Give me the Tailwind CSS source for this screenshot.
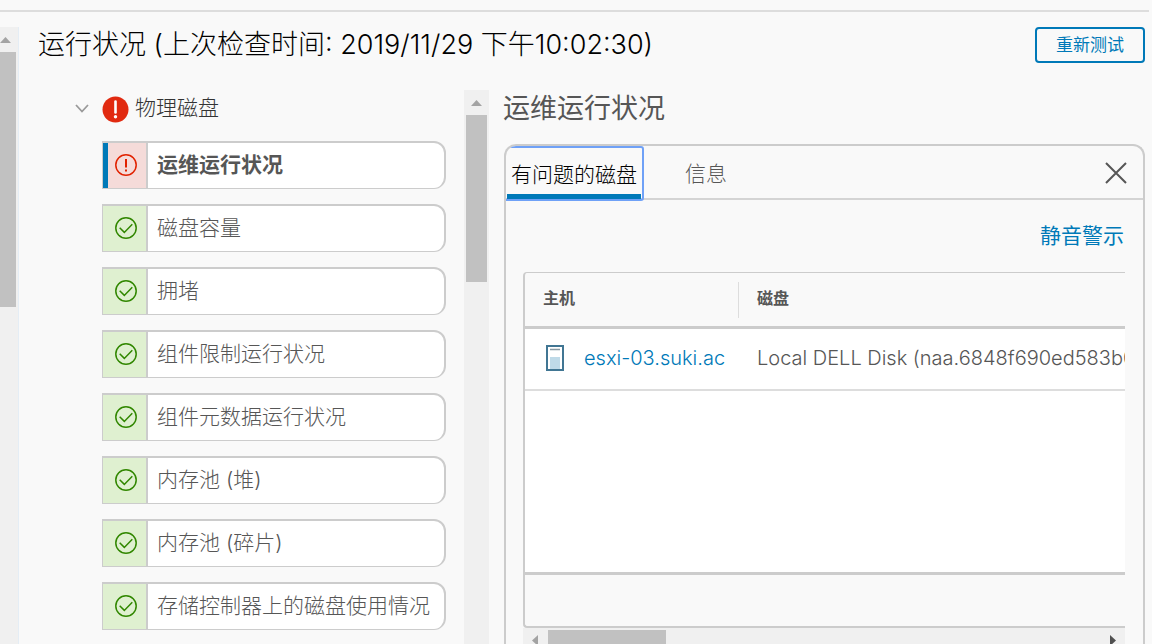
<!DOCTYPE html>
<html lang="zh-CN">
<head>
<meta charset="utf-8">
<title>运行状况</title>
<script src="https://cdn.jsdelivr.net/npm/@tailwindcss/browser@4"></script>
</head>
<body class="flex h-screen flex-col overflow-hidden bg-[#f9f9f9] font-['Metropolis','Inter','Noto_Sans_CJK_SC',sans-serif] text-[#565656]">
<svg class="hidden">
  <symbol id="ok" viewBox="0 0 24 24"><g fill="none" stroke="#318700" stroke-width="1.5"><circle cx="12" cy="12" r="10.2"/><path d="M5.7 11.8l4.6 4.6 8-8.2"/></g></symbol>
</svg>
<div class="mt-[10px] mr-[3px] h-[2px] shrink-0 bg-[#ddd]"></div>
<div class="mt-[15px] flex min-h-0 flex-1">
  <div class="flex w-[19px] shrink-0 flex-col border-r border-[#e4edf5] bg-[#f0f0f0]">
    <svg class="mt-[10px] h-[6px] w-[11px]" viewBox="0 0 11 6"><path d="M0 6L5.500 0 11 6z" fill="#a3a3a3"/></svg>
    <div class="mt-[9px] h-[255px] w-4 bg-[#c1c1c1]"></div>
  </div>
  <main class="flex min-w-0 flex-1 flex-col pr-[7px]">
    <header class="flex h-9 shrink-0 items-center justify-between pl-[19px]">
      <h1 class="text-[27px] leading-9 font-light whitespace-nowrap text-black">运行状况 (上次检查时间: 2019/11/29 下午10:02:30)</h1>
      <button class="h-9 w-[110px] rounded-[4px] border-2 border-[#0079b8] text-[17px] leading-8 text-[#0079b8]">重新测试</button>
    </header>
    <div class="mt-[27px] flex min-h-0 flex-1">
      <nav class="w-[445px] shrink-0 overflow-hidden pr-[18px] pl-[55px]">
        <button class="flex h-9 items-center">
          <svg class="h-4 w-4" viewBox="0 0 16 16" fill="none" stroke="#9a9a9a" stroke-width="1.800"><path d="M2 5l6 6.500L14 5"/></svg>
          <svg class="mt-[3px] ml-3 h-[27px] w-[27px]" viewBox="0 0 27 27"><circle cx="13.500" cy="13.500" r="13" fill="#e12a10"/><path d="M13.500 5.500v11" stroke="#fff" stroke-width="2.600" stroke-linecap="round"/><circle cx="13.500" cy="20.700" r="1.700" fill="#fff"/></svg>
          <span class="ml-[6px] text-[21px] leading-8 font-light text-[#333]">物理磁盘</span>
        </button>
        <ul class="mt-[15px] ml-7 flex flex-col gap-[15px] text-[21px] font-light">
          <li><button class="flex h-12 w-full overflow-hidden rounded-r-[12px] border border-t-2 border-r-2 border-[#ccc] bg-white text-left"><span class="flex h-full w-[45px] shrink-0 items-center justify-center border-r-2 border-l-[5px] border-[#ccc] border-l-[#0079b8] bg-[#f5dbd9] pr-[2px] pb-[2px]"><svg class="h-6 w-6" viewBox="0 0 24 24" fill="none" stroke="#e12200" stroke-width="1.500"><circle cx="12" cy="12" r="10.200"/><path d="M12 6v8.500M12 16.500v2" stroke-width="2"/></svg></span><span class="pl-[9px] leading-[44px] font-bold whitespace-nowrap">运维运行状况</span></button></li>
          <li><button class="flex h-12 w-full overflow-hidden rounded-r-[12px] border border-t-2 border-r-2 border-[#ccc] bg-white text-left"><span class="flex h-full w-[45px] shrink-0 items-center justify-center border-r-2 border-[#ccc] bg-[#dff0d0] pb-[2px] pl-[3px]"><svg class="h-6 w-6"><use href="#ok"/></svg></span><span class="pl-[9px] leading-[44px] whitespace-nowrap">磁盘容量</span></button></li>
          <li><button class="flex h-12 w-full overflow-hidden rounded-r-[12px] border border-t-2 border-r-2 border-[#ccc] bg-white text-left"><span class="flex h-full w-[45px] shrink-0 items-center justify-center border-r-2 border-[#ccc] bg-[#dff0d0] pb-[2px] pl-[3px]"><svg class="h-6 w-6"><use href="#ok"/></svg></span><span class="pl-[9px] leading-[44px] whitespace-nowrap">拥堵</span></button></li>
          <li><button class="flex h-12 w-full overflow-hidden rounded-r-[12px] border border-t-2 border-r-2 border-[#ccc] bg-white text-left"><span class="flex h-full w-[45px] shrink-0 items-center justify-center border-r-2 border-[#ccc] bg-[#dff0d0] pb-[2px] pl-[3px]"><svg class="h-6 w-6"><use href="#ok"/></svg></span><span class="pl-[9px] leading-[44px] whitespace-nowrap">组件限制运行状况</span></button></li>
          <li><button class="flex h-12 w-full overflow-hidden rounded-r-[12px] border border-t-2 border-r-2 border-[#ccc] bg-white text-left"><span class="flex h-full w-[45px] shrink-0 items-center justify-center border-r-2 border-[#ccc] bg-[#dff0d0] pb-[2px] pl-[3px]"><svg class="h-6 w-6"><use href="#ok"/></svg></span><span class="pl-[9px] leading-[44px] whitespace-nowrap">组件元数据运行状况</span></button></li>
          <li><button class="flex h-12 w-full overflow-hidden rounded-r-[12px] border border-t-2 border-r-2 border-[#ccc] bg-white text-left"><span class="flex h-full w-[45px] shrink-0 items-center justify-center border-r-2 border-[#ccc] bg-[#dff0d0] pb-[2px] pl-[3px]"><svg class="h-6 w-6"><use href="#ok"/></svg></span><span class="pl-[9px] leading-[44px] whitespace-nowrap">内存池 (堆)</span></button></li>
          <li><button class="flex h-12 w-full overflow-hidden rounded-r-[12px] border border-t-2 border-r-2 border-[#ccc] bg-white text-left"><span class="flex h-full w-[45px] shrink-0 items-center justify-center border-r-2 border-[#ccc] bg-[#dff0d0] pb-[2px] pl-[3px]"><svg class="h-6 w-6"><use href="#ok"/></svg></span><span class="pl-[9px] leading-[44px] whitespace-nowrap">内存池 (碎片)</span></button></li>
          <li><button class="flex h-12 w-full overflow-hidden rounded-r-[12px] border border-t-2 border-r-2 border-[#ccc] bg-white text-left"><span class="flex h-full w-[45px] shrink-0 items-center justify-center border-r-2 border-[#ccc] bg-[#dff0d0] pb-[2px] pl-[3px]"><svg class="h-6 w-6"><use href="#ok"/></svg></span><span class="pl-[9px] leading-[44px] whitespace-nowrap">存储控制器上的磁盘使用情况</span></button></li>
        </ul>
      </nav>
      <div class="flex w-[25px] shrink-0 flex-col items-center bg-[#f0f0f0]">
        <svg class="mt-[10px] h-[6px] w-[11px]" viewBox="0 0 11 6"><path d="M0 6L5.500 0 11 6z" fill="#a3a3a3"/></svg>
        <div class="mt-[9px] h-[167px] w-[21px] bg-[#c1c1c1]"></div>
      </div>
      <section class="ml-[14px] flex min-w-0 flex-1 flex-col">
        <h2 class="h-[54px] shrink-0 text-[27px] leading-[38px] font-normal">运维运行状况</h2>
        <div class="ml-px min-h-0 flex-1 overflow-hidden rounded-t-[12px] border-2 border-b-0 border-[#ccc]">
          <div class="flex h-[54px] items-start border-b-2 border-[#d4d4d4]" role="tablist">
            <button role="tab" aria-selected="true" class="-ml-[2px] h-[55px] w-[140px] shrink-0 rounded-[3px] border-2 border-[#6fa1f7] px-px text-[21px] font-light text-black"><span class="block h-[51px] border-b-[5px] border-[#0079b8] pt-[6px] leading-[42px]">有问题的磁盘</span></button>
            <button role="tab" aria-selected="false" class="ml-[41px] pt-[7px] text-[21px] leading-[42px] font-light">信息</button>
            <button aria-label="关闭" class="mt-4 mr-4 ml-auto"><svg class="h-[22px] w-[22px]" viewBox="0 0 22 22" stroke="#565656" stroke-width="2"><path d="M1 1l20 20M21 1L1 21"/></svg></button>
          </div>
          <div class="flex h-[72px] items-start justify-end pt-[15px] pr-[19px]">
            <a href="#" class="text-[21px] leading-[42px] font-normal text-[#0079b8]">静音警示</a>
          </div>
          <div class="mr-[18px] ml-[17px] overflow-hidden">
            <div class="rounded-l-[4px] border-t border-b-2 border-l-2 border-[#ccc]">
              <table class="w-full table-fixed border-separate border-spacing-0 text-left">
                <thead>
                  <tr class="h-14">
                    <th class="w-[214px] border-b-[3px] border-[#ccc] p-0 text-[16px] font-bold"><span class="flex h-9 items-center border-r border-[#ddd] pb-[3px] pl-[18px]">主机</span></th>
                    <th class="border-b-[3px] border-[#ccc] p-0 pb-[3px] pl-[18px] text-[16px] font-bold">磁盘</th>
                  </tr>
                </thead>
                <tbody class="bg-white">
                  <tr class="h-[62px]">
                    <td class="border-b-2 border-[#ddd] p-0 pb-[2px]"><span class="flex items-center pl-[21px]"><svg class="mr-5 h-[26px] w-[18px] shrink-0" viewBox="0 0 18 26"><path d="M1 1h16v24H1z" fill="#fff" stroke="#417693" stroke-width="2"/><path d="M4 4.500h10" stroke="#8798a2" stroke-width="1.500"/><path d="M4 12h10v12H4z" fill="#bfdae8"/></svg><a href="#" class="text-[20px] leading-8 font-light whitespace-nowrap text-[#0079b8]">esxi-03.suki.ac</a></span></td>
                    <td class="overflow-hidden border-b-2 border-[#ddd] p-0 pb-[2px] pl-[18px] text-[20px] leading-8 font-light whitespace-nowrap">Local DELL Disk (naa.6848f690ed583b0</td>
                  </tr>
                </tbody>
              </table>
              <div class="h-[181px] bg-white"></div>
              <div class="h-[54px] border-t-[3px] border-[#ccc]"></div>
            </div>
            <div class="flex h-5 justify-between bg-[#f0f0f0] pt-[2px]">
              <div class="flex"><svg class="mt-[5px] ml-[9px] h-[11px] w-[6px]" viewBox="0 0 6 11"><path d="M6 0v11L0 5.500z" fill="#a3a3a3"/></svg><div class="ml-[10px] h-[18px] w-[118px] bg-[#c1c1c1]"></div></div>
              <svg class="mt-[5px] mr-[9px] h-[11px] w-[6px]" viewBox="0 0 6 11"><path d="M0 0v11l6-5.500z" fill="#505050"/></svg>
            </div>
          </div>
        </div>
      </section>
    </div>
  </main>
</div>
</body>
</html>
